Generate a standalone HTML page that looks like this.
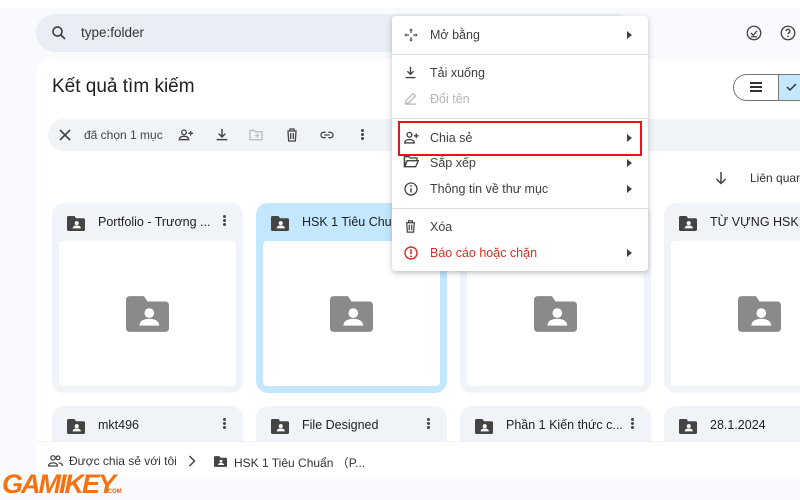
<!DOCTYPE html>
<html><head><meta charset="utf-8"><style>
*{box-sizing:border-box;margin:0;padding:0}
html,body{width:800px;height:500px;overflow:hidden}
body{background:#f8fafd;font-family:"Liberation Sans",sans-serif;color:#1f1f1f;position:relative}
.a{position:absolute;white-space:nowrap}
.card{position:absolute;background:#f0f4f9;border-radius:12px;width:191px;height:190px;overflow:hidden}
.card.r2{height:36px;border-radius:12px 12px 0 0}
.card.sel{background:#c2e7ff}
.card .t{position:absolute;left:46px;top:12px;font-size:12.5px;color:#1f1f1f;white-space:nowrap}
.card .fi{position:absolute;left:15px;top:13px}
.card .dots{position:absolute;left:171px;top:12px}
.card .in{position:absolute;left:7px;top:38px;right:7px;height:145px;background:#fff;border-radius:4px}
.card .big{position:absolute;left:67px;top:55px}
.mi{position:absolute;left:0;width:256px;height:26px;font-size:12.5px;color:#3c4043}
.mi .tx{position:absolute;left:38px;top:6px;white-space:nowrap}
.mi .ic{position:absolute;left:11px;top:5px}
.mi .ar{position:absolute;left:235px;top:9px;width:0;height:0;border-left:5px solid #444;border-top:4px solid transparent;border-bottom:4px solid transparent}
.hr{position:absolute;left:0;width:256px;height:1px;background:#dadce0}
</style></head><body>
<div class="a" style="left:0;top:0;width:800px;height:8px;background:#fff"></div>
<div class="a" style="left:36px;top:14px;width:600px;height:38px;background:#e9eef6;border-radius:19px"></div>
<svg class="a" style="left:50px;top:24px" width="18" height="18" viewBox="0 0 24 24"><circle cx="10" cy="10" r="6" fill="none" stroke="#444" stroke-width="2.2"/><path d="M14.5 14.5 L20 20" stroke="#444" stroke-width="2.4"/></svg>
<div class="a" style="left:81px;top:25px;font-size:13.5px;color:#333">type:folder</div>
<svg class="a" style="left:745px;top:24px" width="18" height="18" viewBox="0 0 24 24"><circle cx="12" cy="12" r="9" fill="none" stroke="#444" stroke-width="1.8"/><path d="M8 12l3 3 5-6M8 17h8" stroke="#444" stroke-width="1.8" fill="none"/></svg>
<svg class="a" style="left:779px;top:24px" width="18" height="18" viewBox="0 0 24 24"><circle cx="12" cy="12" r="9" fill="none" stroke="#444" stroke-width="1.8"/><path d="M9.5 9.5a2.5 2.5 0 1 1 3.5 2.3c-.8.4-1 1-1 1.7" stroke="#444" stroke-width="1.8" fill="none"/><circle cx="12" cy="16.5" r="1.1" fill="#444"/></svg>
<div class="a" style="left:36px;top:59px;width:780px;height:400px;background:#fff;border-radius:16px"></div>
<div class="a" style="left:52px;top:76px;font-size:19px;color:#1f1f1f">Kết quả tìm kiếm</div>
<div class="a" style="left:733px;top:74px;width:80px;height:27px;border:1px solid #747775;border-radius:14px;background:#fff"></div>
<div class="a" style="left:778px;top:75px;width:30px;height:25px;background:#c2e7ff;border-left:1px solid #747775"></div>
<div class="a" style="left:750px;top:82px;width:12px;height:2px;background:#333;box-shadow:0 4px 0 #333,0 8px 0 #333"></div>
<svg class="a" style="left:785px;top:81px" width="12" height="12" viewBox="0 0 12 12"><path d="M2 6l3 3 6-6" stroke="#333" stroke-width="1.5" fill="none"/></svg>
<div class="a" style="left:48px;top:119px;width:770px;height:32px;background:#f0f4f9;border-radius:16px"></div>
<svg class="a" style="left:59px;top:129px" width="12" height="12" viewBox="0 0 12 12"><path d="M1 1L11 11M11 1L1 11" stroke="#444" stroke-width="1.6"/></svg>
<div class="a" style="left:84px;top:128px;font-size:12px;color:#444">đã chọn 1 mục</div>
<svg class="a" style="left:178px;top:127px" width="16" height="16" viewBox="0 0 24 24"><circle cx="9" cy="8" r="3.5" fill="none" stroke="#444" stroke-width="2"/><path d="M2 19c0-4 4-5 7-5s7 1 7 5z" fill="none" stroke="#444" stroke-width="2"/><path d="M19 6v7M15.5 9.5h7" stroke="#444" stroke-width="2"/></svg>
<svg class="a" style="left:214px;top:127px" width="16" height="16" viewBox="0 0 24 24"><path d="M12 3v11M7 10l5 5 5-5M4 19h16" stroke="#444" stroke-width="2.2" fill="none"/></svg>
<svg class="a" style="left:248px;top:127px" width="16" height="16" viewBox="0 0 24 24"><path d="M3 5h6l2 2h10v12H3z" fill="none" stroke="#bbb" stroke-width="2"/><path d="M10 13h6M13 10l3 3-3 3" stroke="#bbb" stroke-width="1.6" fill="none"/></svg>
<svg class="a" style="left:284px;top:127px" width="16" height="16" viewBox="0 0 24 24"><path d="M5 6h14M9 6V3h6v3M6 6l1 15h10l1-15M10 9v9M14 9v9" stroke="#444" stroke-width="2" fill="none"/></svg>
<svg class="a" style="left:318px;top:127px" width="18" height="16" viewBox="0 0 24 24"><path d="M10 8H7a4 4 0 0 0 0 8h3M14 8h3a4 4 0 0 1 0 8h-3M8 12h8" stroke="#444" stroke-width="2" fill="none"/></svg>
<div class="a" style="left:361px;top:129px;width:3px;height:3px;background:#444;border-radius:50%;box-shadow:0 4px 0 #444,0 8px 0 #444"></div>
<svg class="a" style="left:715px;top:171px" width="12" height="14" viewBox="0 0 12 14"><path d="M6 1v11M1.5 8L6 12.5 10.5 8" stroke="#444" stroke-width="1.5" fill="none"/></svg>
<div class="a" style="left:750px;top:171px;font-size:12px;color:#333">Liên quan</div>
<svg width="0" height="0" style="position:absolute"><defs>
<symbol id="fs" viewBox="0 0 24 20"><path d="M2 0h8l2 3h10a2 2 0 0 1 2 2v13a2 2 0 0 1-2 2H2a2 2 0 0 1-2-2V2a2 2 0 0 1 2-2z" fill="currentColor"/><circle cx="13" cy="9.5" r="2.7" fill="#fff"/><path d="M7.5 16.5c0-3 3-3.8 5.5-3.8s5.5.8 5.5 3.8z" fill="#fff"/></symbol>
</defs></svg>
<div class="card" style="left:52px;top:203px"><svg class="fi" width="18" height="15" style="color:#444"><use href="#fs"/></svg><div class="t">Portfolio - Trương ...</div><div class="dots"><div style="width:3px;height:3px;background:#444;border-radius:50%;box-shadow:0 4px 0 #444,0 8px 0 #444"></div></div><div class="in"><svg class="big" width="43" height="36" style="color:#8a8a8a"><use href="#fs"/></svg></div></div>
<div class="card sel" style="left:256px;top:203px"><svg class="fi" width="18" height="15" style="color:#444"><use href="#fs"/></svg><div class="t">HSK 1 Tiêu Chuẩn</div><div class="in"><svg class="big" width="43" height="36" style="color:#8a8a8a"><use href="#fs"/></svg></div></div>
<div class="card" style="left:460px;top:203px"><div class="in"><svg class="big" width="43" height="36" style="color:#8a8a8a"><use href="#fs"/></svg></div></div>
<div class="card" style="left:664px;top:203px"><svg class="fi" width="18" height="15" style="color:#444"><use href="#fs"/></svg><div class="t">TỪ VỰNG HSK</div><div class="in"><svg class="big" width="43" height="36" style="color:#8a8a8a"><use href="#fs"/></svg></div></div>
<div class="card r2" style="left:52px;top:406px"><svg class="fi" width="18" height="15" style="color:#444"><use href="#fs"/></svg><div class="t">mkt496</div><div class="dots"><div style="width:3px;height:3px;background:#444;border-radius:50%;box-shadow:0 4px 0 #444,0 8px 0 #444"></div></div></div>
<div class="card r2" style="left:256px;top:406px"><svg class="fi" width="18" height="15" style="color:#444"><use href="#fs"/></svg><div class="t">File Designed</div><div class="dots"><div style="width:3px;height:3px;background:#444;border-radius:50%;box-shadow:0 4px 0 #444,0 8px 0 #444"></div></div></div>
<div class="card r2" style="left:460px;top:406px"><svg class="fi" width="18" height="15" style="color:#444"><use href="#fs"/></svg><div class="t">Phần 1 Kiến thức c...</div><div class="dots"><div style="width:3px;height:3px;background:#444;border-radius:50%;box-shadow:0 4px 0 #444,0 8px 0 #444"></div></div></div>
<div class="card r2" style="left:664px;top:406px"><svg class="fi" width="18" height="15" style="color:#444"><use href="#fs"/></svg><div class="t">28.1.2024</div></div>
<div class="a" style="left:36px;top:441px;width:764px;height:38px;background:#fff;border-top:1px solid #eceff3"></div>
<div class="a" style="left:0;top:479px;width:800px;height:21px;background:#f8fafd"></div>
<svg class="a" style="left:48px;top:454px" width="15" height="14" viewBox="0 0 24 22"><circle cx="8" cy="6" r="3.5" fill="none" stroke="#444" stroke-width="2"/><path d="M1 19c0-4 4-5 7-5s7 1 7 5z" fill="none" stroke="#444" stroke-width="2"/><circle cx="16" cy="6" r="3" fill="none" stroke="#444" stroke-width="2"/><path d="M17 14c3 0 6 1 6 5" stroke="#444" stroke-width="2" fill="none"/></svg>
<div class="a" style="left:69px;top:454px;font-size:12px;color:#333">Được chia sẻ với tôi</div>
<svg class="a" style="left:188px;top:455px" width="8" height="12" viewBox="0 0 8 12"><path d="M1.5 1l5 5-5 5" stroke="#444" stroke-width="1.5" fill="none"/></svg>
<svg class="a" style="left:214px;top:456px;color:#444" width="13" height="11"><use href="#fs"/></svg>
<div class="a" style="left:234px;top:454px;font-size:12px;color:#333">HSK 1 Tiêu Chuẩn （P...</div>
<div class="a" style="left:2px;top:470px;font-size:27px;font-weight:bold;font-style:italic;color:#f7720f;letter-spacing:-2px;line-height:28px">GAMIKEY</div>
<div class="a" style="left:106px;top:489px;font-size:6px;font-weight:bold;color:#f06010">.COM</div>
<div class="a" style="left:392px;top:16px;width:256px;height:255px;background:#fff;border-radius:4px;box-shadow:0 2px 6px rgba(0,0,0,.25)">
 <div class="mi" style="top:6px"><svg class="ic" width="16" height="16" viewBox="0 0 24 24"><path d="M12 2l3 3h-2v4h-2V5H9zM12 22l-3-3h2v-4h2v4h2zM2 12l3-3v2h4v2H5v2zM22 12l-3 3v-2h-4v-2h4V9z" fill="#555"/></svg><div class="tx">Mở bằng</div><div class="ar"></div></div>
 <div class="hr" style="top:38px"></div>
 <div class="mi" style="top:44px"><svg class="ic" width="15" height="15" viewBox="0 0 24 24"><path d="M12 3v11M7 10l5 5 5-5M4 20h16" stroke="#444" stroke-width="2.2" fill="none"/></svg><div class="tx">Tải xuống</div></div>
 <div class="mi" style="top:70px"><svg class="ic" width="15" height="15" viewBox="0 0 24 24"><path d="M4 20l1-5L16 4l4 4L9 19zM3 21h18" stroke="#bbb" stroke-width="2" fill="none"/></svg><div class="tx" style="color:#b5b5b5">Đổi tên</div></div>
 <div class="hr" style="top:102px"></div>
 <div class="mi" style="top:109px"><svg class="ic" width="17" height="15" viewBox="0 0 24 22"><circle cx="9" cy="7" r="3.5" fill="none" stroke="#444" stroke-width="2"/><path d="M2 19c0-4 4-5 7-5s7 1 7 5z" fill="none" stroke="#444" stroke-width="2"/><path d="M19 5v7M15.5 8.5h7" stroke="#444" stroke-width="2"/></svg><div class="tx">Chia sẻ</div><div class="ar"></div></div>
 <div class="mi" style="top:134px"><svg class="ic" width="16" height="14" viewBox="0 0 24 20"><path d="M2 2h7l2 2h10v4H6L3 17z M2 2v15h17l4-9H6" stroke="#444" stroke-width="2" fill="none"/></svg><div class="tx">Sắp xếp</div><div class="ar"></div></div>
 <div class="mi" style="top:160px"><svg class="ic" width="16" height="16" viewBox="0 0 24 24"><circle cx="12" cy="12" r="9" fill="none" stroke="#444" stroke-width="2"/><path d="M12 11v6" stroke="#444" stroke-width="2.2"/><circle cx="12" cy="7.5" r="1.3" fill="#444"/></svg><div class="tx">Thông tin về thư mục</div><div class="ar"></div></div>
 <div class="hr" style="top:192px"></div>
 <div class="mi" style="top:198px"><svg class="ic" width="15" height="15" viewBox="0 0 24 24"><path d="M5 6h14M9 6V3h6v3M6 6l1 15h10l1-15M10 9v9M14 9v9" stroke="#444" stroke-width="2" fill="none"/></svg><div class="tx">Xóa</div></div>
 <div class="mi" style="top:224px"><svg class="ic" width="16" height="16" viewBox="0 0 24 24"><circle cx="12" cy="12" r="9" fill="none" stroke="#d93025" stroke-width="2.2"/><path d="M12 6.5v7" stroke="#d93025" stroke-width="2.4"/><circle cx="12" cy="17" r="1.4" fill="#d93025"/></svg><div class="tx" style="color:#d93025">Báo cáo hoặc chặn</div><div class="ar"></div></div>
</div>
<div class="a" style="left:398px;top:121px;width:244px;height:35px;border:2px solid #e8141b"></div>
</body></html>
